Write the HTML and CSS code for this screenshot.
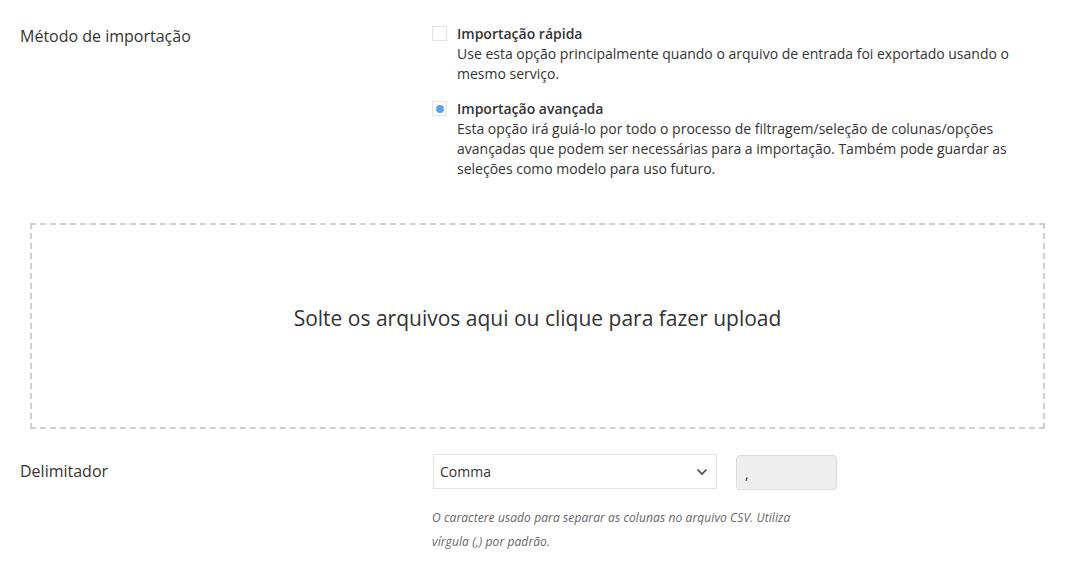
FILE: index.html
```html
<!DOCTYPE html>
<html lang="pt-BR">
<head>
    <meta charset="UTF-8">
    <title>Importação</title>
    <link rel="stylesheet" href="styles.css">
</head>
<body>
    <div class="page">
        <div class="field-row method-row">
            <div class="field-label">Método de importação</div>
            <div class="field-body">
                <div class="option">
                    <span class="box"></span>
                    <div class="option-text">
                        <div class="option-title">Importação rápida</div>
                        <div class="option-desc">Use esta opção principalmente quando o arquivo de entrada foi exportado usando o mesmo serviço.</div>
                    </div>
                </div>
                <div class="option">
                    <span class="box checked"><span class="dot"></span></span>
                    <div class="option-text">
                        <div class="option-title">Importação avançada</div>
                        <div class="option-desc">Esta opção irá guiá-lo por todo o processo de filtragem/seleção de colunas/opções avançadas que podem ser necessárias para a importação. Também pode guardar as seleções como modelo para uso futuro.</div>
                    </div>
                </div>
            </div>
        </div>

        <div class="dropzone">Solte os arquivos aqui ou clique para fazer upload</div>

        <div class="field-row delim-row">
            <div class="field-label">Delimitador</div>
            <div class="field-body">
                <div class="controls">
                    <div class="select">
                        <span>Comma</span>
                        <svg width="12" height="8" viewBox="0 0 12 8"><path d="M1.5 1.5 L6 6 L10.5 1.5" fill="none" stroke="#444" stroke-width="1.6"/></svg>
                    </div>
                    <div class="char-input">,</div>
                </div>
                <p class="help">O caractere usado para separar as colunas no arquivo CSV. Utiliza vírgula (,) por padrão.</p>
            </div>
        </div>
    </div>
</body>
</html>
```

FILE: styles.css
```css
body {
    margin: 0;
    font-family: "Open Sans", Arial, sans-serif;
    color: #333;
    background: #fff;
}
.page {
    padding: 24px 0 0 20px;
}
.field-row {
    display: grid;
    grid-template-columns: 412px 585px;
}
.field-label {
    font-size: 16px;
    line-height: 24px;
}
.option {
    display: flex;
    gap: 10px;
    margin-bottom: 15px;
}
.box {
    width: 13px;
    height: 13px;
    border: 1px solid #e3e3e3;
    margin-top: 2px;
    flex: none;
    display: flex;
    align-items: center;
    justify-content: center;
}
.dot {
    width: 8px;
    height: 8px;
    border-radius: 50%;
    background: #5aa2ee;
}
.option-title {
    font-size: 14px;
    font-weight: 600;
    line-height: 20px;
}
.option-desc {
    font-size: 14px;
    line-height: 20px;
}
.dropzone {
    margin: 29px 0 0 10px;
    width: 1015px;
    height: 206px;
    box-sizing: border-box;
    border: 2px dashed #cfcfcf;
    display: flex;
    align-items: center;
    justify-content: center;
    font-size: 21px;
    padding-bottom: 16px;
}
.delim-row {
    margin-top: 25px;
}
.delim-row .field-label {
    padding-top: 5px;
}
.controls {
    display: flex;
    align-items: flex-start;
    gap: 19px;
    padding-left: 1px;
}
.select {
    width: 284px;
    height: 35px;
    box-sizing: border-box;
    border: 1px solid #e3e3e3;
    display: flex;
    align-items: center;
    justify-content: space-between;
    padding: 0 8px 0 6px;
    font-size: 14px;
}
.char-input {
    width: 101px;
    height: 35px;
    margin-top: 1px;
    box-sizing: border-box;
    border: 1px solid #dcdcdc;
    border-radius: 4px;
    background: #eee;
    font-size: 14px;
    padding: 8px 0 0 8px;
}
.help {
    margin: 16px 0 0;
    width: 380px;
    font-size: 12px;
    letter-spacing: 0.1px;
    font-style: italic;
    line-height: 24px;
    color: #666;
}
```
